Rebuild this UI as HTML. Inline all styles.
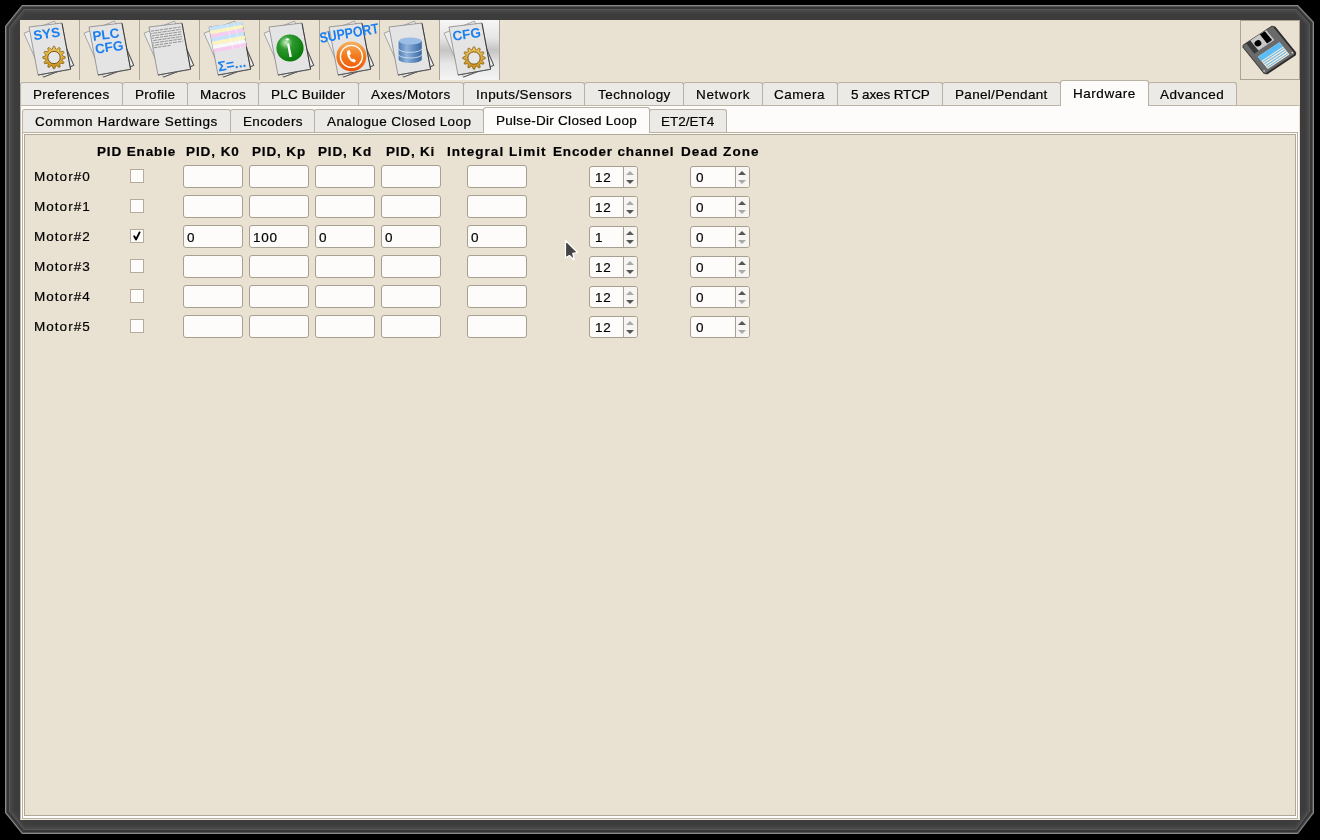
<!DOCTYPE html>
<html><head><meta charset="utf-8"><style>
html,body{margin:0;padding:0;}
body{width:1320px;height:840px;background:#000;position:relative;overflow:hidden;font-family:"Liberation Sans",sans-serif;}
div{position:absolute;box-sizing:border-box;}
.t{font-size:13.5px;line-height:16px;white-space:pre;color:#000;will-change:transform;-webkit-text-stroke:0.2px #000;}
#win{left:20px;top:20px;width:1280px;height:800px;background:#e9e1d2;}
.sep{top:20px;width:1px;height:60px;background:#aca493;}
#cfgbtn{left:440px;top:20px;width:59px;height:60px;background:linear-gradient(#f6f6f6 0%,#e6e6e6 30%,#c4c4c4 50%,#e6e6e6 72%,#f4f4f4 100%);}
#savebtn{left:1240px;top:20px;width:60px;height:60px;border:1px solid #aca493;}
#page{left:20px;top:105px;width:1280px;height:715px;background:#fdfcfa;border:1px solid #bdb5a5;border-bottom-color:#efe9de;border-right-color:#e7e0d3;}
.tab{background:#ebeae6;border:1px solid #b9b1a1;border-bottom:none;border-radius:3px 3px 0 0;}
.tab.act{background:#fdfcfa;}
#subpage{left:22px;top:132px;width:1276px;height:687px;border:1px solid #b9b1a1;background:#fdfcfa;}
#innerframe{left:24px;top:134px;width:1272px;height:682px;border:1px solid #b0a897;background:#e9e1d2;}
.chk{width:14px;height:14px;border:1px solid #b4ac9c;background:#fdfcfa;}
.chk svg{position:absolute;left:-1px;top:-1px;}
.ent{width:60px;height:23px;border:1px solid #a79f8f;border-radius:3px;background:#fdfcfb;}
.spin{height:22px;border:1px solid #a79f8f;border-radius:3px;background:#fdfcfb;}
.sb{top:0;width:1px;height:20px;background:#a79f8f;}
.arr{position:absolute;}
.sa{top:0;height:20px;background:#f6f5f1;border-radius:0 2px 2px 0;}

</style></head><body>
<svg style="position:absolute;left:0;top:0" width="1320" height="840"><polygon points="5.00,26.00 22.00,5.00 1298.00,5.00 1314.00,22.00 1314.00,813.00 1298.00,834.00 22.00,834.00 5.00,813.00" fill="#8a8a8a"/><polygon points="6.00,26.41 22.41,6.00 1297.59,6.00 1313.00,22.41 1313.00,812.59 1297.59,833.00 22.41,833.00 6.00,812.59" fill="#555"/><polygon points="7.00,26.83 22.83,7.00 1297.17,7.00 1312.00,22.83 1312.00,812.17 1297.17,832.00 22.83,832.00 7.00,812.17" fill="#363636"/><polygon points="9.00,27.66 23.66,9.00 1296.34,9.00 1310.00,23.66 1310.00,811.34 1296.34,830.00 23.66,830.00 9.00,811.34" fill="#575757"/><polygon points="10.00,28.07 24.07,10.00 1295.93,10.00 1309.00,24.07 1309.00,810.93 1295.93,829.00 24.07,829.00 10.00,810.93" fill="#474747"/><polygon points="12.00,28.90 24.90,12.00 1295.10,12.00 1307.00,24.90 1307.00,810.10 1295.10,827.00 24.90,827.00 12.00,810.10" fill="#404040"/><polygon points="14.00,29.73 25.73,14.00 1294.27,14.00 1305.00,25.73 1305.00,809.27 1294.27,825.00 25.73,825.00 14.00,809.27" fill="#3c3c3c"/></svg><div id="win"></div><div id="cfgbtn"></div><div class="sep" style="left:79px"></div><div class="sep" style="left:139px"></div><div class="sep" style="left:199px"></div><div class="sep" style="left:259px"></div><div class="sep" style="left:319px"></div><div class="sep" style="left:379px"></div><div class="sep" style="left:439px"></div><div class="sep" style="left:499px"></div><div id="savebtn"></div><div id="page"></div><div class="tab" style="left:20px;width:103px;top:82px;height:23px"></div><div class="t" style="left:33.27px;top:87.00px;width:80.5px;letter-spacing:0.334px;color:#000;">Preferences</div>
<div class="tab" style="left:122px;width:66px;top:82px;height:23px"></div><div class="t" style="left:134.79px;top:87.00px;width:44.4px;letter-spacing:0.308px;color:#000;">Profile</div>
<div class="tab" style="left:187px;width:72px;top:82px;height:23px"></div><div class="t" style="left:199.94px;top:87.00px;width:50.1px;letter-spacing:0.310px;color:#000;">Macros</div>
<div class="tab" style="left:258px;width:101px;top:82px;height:23px"></div><div class="t" style="left:271.36px;top:87.00px;width:78.3px;letter-spacing:0.203px;color:#000;">PLC Builder</div>
<div class="tab" style="left:358px;width:106px;top:82px;height:23px"></div><div class="t" style="left:371.16px;top:87.00px;width:83.7px;letter-spacing:0.423px;color:#000;">Axes/Motors</div>
<div class="tab" style="left:463px;width:122px;top:82px;height:23px"></div><div class="t" style="left:475.92px;top:87.00px;width:100.2px;letter-spacing:0.435px;color:#000;">Inputs/Sensors</div>
<div class="tab" style="left:584px;width:100px;top:82px;height:23px"></div><div class="t" style="left:597.59px;top:87.00px;width:76.8px;letter-spacing:0.452px;color:#000;">Technology</div>
<div class="tab" style="left:683px;width:80px;top:82px;height:23px"></div><div class="t" style="left:695.86px;top:87.00px;width:58.3px;letter-spacing:0.681px;color:#000;">Network</div>
<div class="tab" style="left:762px;width:76px;top:82px;height:23px"></div><div class="t" style="left:774.48px;top:87.00px;width:55.0px;letter-spacing:0.503px;color:#000;">Camera</div>
<div class="tab" style="left:837px;width:106px;top:82px;height:23px"></div><div class="t" style="left:850.62px;top:87.00px;width:82.8px;letter-spacing:-0.116px;color:#000;">5 axes RTCP</div>
<div class="tab" style="left:942px;width:119px;top:82px;height:23px"></div><div class="t" style="left:955.19px;top:87.00px;width:96.6px;letter-spacing:0.311px;color:#000;">Panel/Pendant</div>
<div class="tab act" style="left:1060px;width:89px;top:80px;height:26px"></div><div class="t" style="left:1073.12px;top:86.00px;width:66.8px;letter-spacing:0.529px;color:#000;">Hardware</div>
<div class="tab" style="left:1148px;width:89px;top:82px;height:23px"></div><div class="t" style="left:1160.39px;top:87.00px;width:68.2px;letter-spacing:0.521px;color:#000;">Advanced</div>
<div id="subpage"></div><div class="tab" style="left:22px;width:209px;top:109px;height:23px"></div><div class="t" style="left:35.05px;top:114.00px;width:186.9px;letter-spacing:0.555px;color:#000;">Common Hardware Settings</div>
<div class="tab" style="left:230px;width:85px;top:109px;height:23px"></div><div class="t" style="left:242.54px;top:114.00px;width:63.9px;letter-spacing:0.359px;color:#000;">Encoders</div>
<div class="tab" style="left:314px;width:170px;top:109px;height:23px"></div><div class="t" style="left:326.87px;top:114.00px;width:148.3px;letter-spacing:0.383px;color:#000;">Analogue Closed Loop</div>
<div class="tab act" style="left:483px;width:167px;top:107px;height:26px"></div><div class="t" style="left:496.00px;top:113.00px;width:145.0px;letter-spacing:0.282px;color:#000;">Pulse-Dir Closed Loop</div>
<div class="tab" style="left:649px;width:78px;top:109px;height:23px"></div><div class="t" style="left:661.38px;top:114.00px;width:57.2px;letter-spacing:-0.007px;color:#000;">ET2/ET4</div>
<div id="innerframe"></div><div class="t" style="left:96.91px;top:144.00px;width:83.2px;letter-spacing:0.864px;font-weight:bold;color:#000;">PID Enable</div>
<div class="t" style="left:186.12px;top:144.00px;width:57.8px;letter-spacing:0.926px;font-weight:bold;color:#000;">PID, K0</div>
<div class="t" style="left:252.00px;top:144.00px;width:58.0px;letter-spacing:0.855px;font-weight:bold;color:#000;">PID, Kp</div>
<div class="t" style="left:318.00px;top:144.00px;width:58.0px;letter-spacing:0.855px;font-weight:bold;color:#000;">PID, Kd</div>
<div class="t" style="left:386.42px;top:144.00px;width:53.2px;letter-spacing:0.806px;font-weight:bold;color:#000;">PID, Ki</div>
<div class="t" style="left:447.22px;top:144.00px;width:103.6px;letter-spacing:1.057px;font-weight:bold;color:#000;">Integral Limit</div>
<div class="t" style="left:552.82px;top:144.00px;width:125.4px;letter-spacing:0.839px;font-weight:bold;color:#000;">Encoder channel</div>
<div class="t" style="left:681.17px;top:144.00px;width:82.7px;letter-spacing:1.071px;font-weight:bold;color:#000;">Dead Zone</div>
<div class="t" style="left:34.00px;top:169.00px;width:60.7px;letter-spacing:1.029px;color:#000;">Motor#0</div>
<div class="chk" style="left:130px;top:169px"></div><div class="ent" style="left:183px;top:165px"></div><div class="ent" style="left:249px;top:165px"></div><div class="ent" style="left:315px;top:165px"></div><div class="ent" style="left:381px;top:165px"></div><div class="ent" style="left:467px;top:165px"></div><div class="spin" style="left:589px;top:166px;width:49px"><div class="sb" style="left:33px"></div><div class="sa" style="left:34px;width:13px"></div></div><div class="t" style="left:595.00px;top:170.00px;width:20.5px;letter-spacing:0.758px;color:#000;">12</div>
<svg class="arr" style="left:626px;top:170px" width="9" height="15"><path d="M0 5 L4 1 L8 5Z" fill="#aaa"/><path d="M0 10 L4 14 L8 10Z" fill="#555"/></svg><div class="spin" style="left:690px;top:166px;width:60px"><div class="sb" style="left:44px"></div><div class="sa" style="left:45px;width:13px"></div></div><div class="t" style="left:696.00px;top:170.00px;width:12.3px;letter-spacing:0.766px;color:#000;">0</div>
<svg class="arr" style="left:738px;top:170px" width="9" height="15"><path d="M0 5 L4 1 L8 5Z" fill="#555"/><path d="M0 10 L4 14 L8 10Z" fill="#aaa"/></svg><div class="t" style="left:34.00px;top:199.00px;width:60.7px;letter-spacing:1.029px;color:#000;">Motor#1</div>
<div class="chk" style="left:130px;top:199px"></div><div class="ent" style="left:183px;top:195px"></div><div class="ent" style="left:249px;top:195px"></div><div class="ent" style="left:315px;top:195px"></div><div class="ent" style="left:381px;top:195px"></div><div class="ent" style="left:467px;top:195px"></div><div class="spin" style="left:589px;top:196px;width:49px"><div class="sb" style="left:33px"></div><div class="sa" style="left:34px;width:13px"></div></div><div class="t" style="left:595.00px;top:200.00px;width:20.5px;letter-spacing:0.758px;color:#000;">12</div>
<svg class="arr" style="left:626px;top:200px" width="9" height="15"><path d="M0 5 L4 1 L8 5Z" fill="#aaa"/><path d="M0 10 L4 14 L8 10Z" fill="#555"/></svg><div class="spin" style="left:690px;top:196px;width:60px"><div class="sb" style="left:44px"></div><div class="sa" style="left:45px;width:13px"></div></div><div class="t" style="left:696.00px;top:200.00px;width:12.3px;letter-spacing:0.766px;color:#000;">0</div>
<svg class="arr" style="left:738px;top:200px" width="9" height="15"><path d="M0 5 L4 1 L8 5Z" fill="#555"/><path d="M0 10 L4 14 L8 10Z" fill="#aaa"/></svg><div class="t" style="left:34.00px;top:229.00px;width:60.7px;letter-spacing:1.029px;color:#000;">Motor#2</div>
<div class="chk" style="left:130px;top:229px"><svg width="13" height="13" viewBox="0 0 13 13"><path d="M4.2 7.3 L6.1 10.4 L9.6 3.4" stroke="#000" stroke-width="1.9" fill="none" stroke-linecap="round" stroke-linejoin="round"/></svg></div><div class="ent" style="left:183px;top:225px"></div><div class="ent" style="left:249px;top:225px"></div><div class="ent" style="left:315px;top:225px"></div><div class="ent" style="left:381px;top:225px"></div><div class="ent" style="left:467px;top:225px"></div><div class="t" style="left:187.00px;top:230.00px;width:12.3px;letter-spacing:0.766px;color:#000;">0</div>
<div class="t" style="left:253.00px;top:230.00px;width:28.8px;letter-spacing:0.766px;color:#000;">100</div>
<div class="t" style="left:319.00px;top:230.00px;width:12.3px;letter-spacing:0.766px;color:#000;">0</div>
<div class="t" style="left:385.00px;top:230.00px;width:12.3px;letter-spacing:0.766px;color:#000;">0</div>
<div class="t" style="left:471.00px;top:230.00px;width:12.3px;letter-spacing:0.766px;color:#000;">0</div>
<div class="spin" style="left:589px;top:226px;width:49px"><div class="sb" style="left:33px"></div><div class="sa" style="left:34px;width:13px"></div></div><div class="t" style="left:595.00px;top:230.00px;width:12.3px;letter-spacing:0.766px;color:#000;">1</div>
<svg class="arr" style="left:626px;top:230px" width="9" height="15"><path d="M0 5 L4 1 L8 5Z" fill="#5a5a5a"/><path d="M0 10 L4 14 L8 10Z" fill="#555"/></svg><div class="spin" style="left:690px;top:226px;width:60px"><div class="sb" style="left:44px"></div><div class="sa" style="left:45px;width:13px"></div></div><div class="t" style="left:696.00px;top:230.00px;width:12.3px;letter-spacing:0.766px;color:#000;">0</div>
<svg class="arr" style="left:738px;top:230px" width="9" height="15"><path d="M0 5 L4 1 L8 5Z" fill="#555"/><path d="M0 10 L4 14 L8 10Z" fill="#aaa"/></svg><div class="t" style="left:34.00px;top:259.00px;width:60.7px;letter-spacing:1.029px;color:#000;">Motor#3</div>
<div class="chk" style="left:130px;top:259px"></div><div class="ent" style="left:183px;top:255px"></div><div class="ent" style="left:249px;top:255px"></div><div class="ent" style="left:315px;top:255px"></div><div class="ent" style="left:381px;top:255px"></div><div class="ent" style="left:467px;top:255px"></div><div class="spin" style="left:589px;top:256px;width:49px"><div class="sb" style="left:33px"></div><div class="sa" style="left:34px;width:13px"></div></div><div class="t" style="left:595.00px;top:260.00px;width:20.5px;letter-spacing:0.758px;color:#000;">12</div>
<svg class="arr" style="left:626px;top:260px" width="9" height="15"><path d="M0 5 L4 1 L8 5Z" fill="#aaa"/><path d="M0 10 L4 14 L8 10Z" fill="#555"/></svg><div class="spin" style="left:690px;top:256px;width:60px"><div class="sb" style="left:44px"></div><div class="sa" style="left:45px;width:13px"></div></div><div class="t" style="left:696.00px;top:260.00px;width:12.3px;letter-spacing:0.766px;color:#000;">0</div>
<svg class="arr" style="left:738px;top:260px" width="9" height="15"><path d="M0 5 L4 1 L8 5Z" fill="#555"/><path d="M0 10 L4 14 L8 10Z" fill="#aaa"/></svg><div class="t" style="left:34.00px;top:289.00px;width:60.7px;letter-spacing:1.029px;color:#000;">Motor#4</div>
<div class="chk" style="left:130px;top:289px"></div><div class="ent" style="left:183px;top:285px"></div><div class="ent" style="left:249px;top:285px"></div><div class="ent" style="left:315px;top:285px"></div><div class="ent" style="left:381px;top:285px"></div><div class="ent" style="left:467px;top:285px"></div><div class="spin" style="left:589px;top:286px;width:49px"><div class="sb" style="left:33px"></div><div class="sa" style="left:34px;width:13px"></div></div><div class="t" style="left:595.00px;top:290.00px;width:20.5px;letter-spacing:0.758px;color:#000;">12</div>
<svg class="arr" style="left:626px;top:290px" width="9" height="15"><path d="M0 5 L4 1 L8 5Z" fill="#aaa"/><path d="M0 10 L4 14 L8 10Z" fill="#555"/></svg><div class="spin" style="left:690px;top:286px;width:60px"><div class="sb" style="left:44px"></div><div class="sa" style="left:45px;width:13px"></div></div><div class="t" style="left:696.00px;top:290.00px;width:12.3px;letter-spacing:0.766px;color:#000;">0</div>
<svg class="arr" style="left:738px;top:290px" width="9" height="15"><path d="M0 5 L4 1 L8 5Z" fill="#555"/><path d="M0 10 L4 14 L8 10Z" fill="#aaa"/></svg><div class="t" style="left:34.00px;top:319.00px;width:60.7px;letter-spacing:1.029px;color:#000;">Motor#5</div>
<div class="chk" style="left:130px;top:319px"></div><div class="ent" style="left:183px;top:315px"></div><div class="ent" style="left:249px;top:315px"></div><div class="ent" style="left:315px;top:315px"></div><div class="ent" style="left:381px;top:315px"></div><div class="ent" style="left:467px;top:315px"></div><div class="spin" style="left:589px;top:316px;width:49px"><div class="sb" style="left:33px"></div><div class="sa" style="left:34px;width:13px"></div></div><div class="t" style="left:595.00px;top:320.00px;width:20.5px;letter-spacing:0.758px;color:#000;">12</div>
<svg class="arr" style="left:626px;top:320px" width="9" height="15"><path d="M0 5 L4 1 L8 5Z" fill="#aaa"/><path d="M0 10 L4 14 L8 10Z" fill="#555"/></svg><div class="spin" style="left:690px;top:316px;width:60px"><div class="sb" style="left:44px"></div><div class="sa" style="left:45px;width:13px"></div></div><div class="t" style="left:696.00px;top:320.00px;width:12.3px;letter-spacing:0.766px;color:#000;">0</div>
<svg class="arr" style="left:738px;top:320px" width="9" height="15"><path d="M0 5 L4 1 L8 5Z" fill="#555"/><path d="M0 10 L4 14 L8 10Z" fill="#aaa"/></svg><svg style="position:absolute;left:560px;top:236px" width="24" height="30" viewBox="560 236 24 30"><path d="M565.5 240.5 L577.5 252.5 L572.8 253.3 L574 260 L569.5 255.5 L565.5 257.8 Z" fill="#444" stroke="#fff" stroke-width="1.2" stroke-linejoin="round"/></svg>
<svg style="position:absolute;left:0;top:0" width="1320" height="90" font-family="Liberation Sans, sans-serif">
<defs>
<g id="doc">
<polygon points="4,13.2 34.5,1.1 53.8,45.4 23.4,57.1" fill="#ececec" stroke="#8a8a8a" stroke-width="0.7"/>
<polyline points="45,25 53.8,45.4 23.4,57.1" fill="none" stroke="#4a4a4a" stroke-width="0.9"/>
<polygon points="9,7 42,3 50.6,49.3 18,55" fill="#e4e4e4" stroke="#7a7a7a" stroke-width="0.7"/>
<line x1="42" y1="3.3" x2="50.6" y2="49.3" stroke="#3a3a3a" stroke-width="1"/>
<line x1="18" y1="55" x2="50.6" y2="49.3" stroke="#555" stroke-width="1"/>
</g>
<path id="gearp" d="M11.18,-0.70 L11.18,0.70 L8.43,1.70 L8.15,2.74 L10.03,4.98 L9.33,6.20 L6.45,5.69 L5.69,6.45 L6.20,9.33 L4.98,10.03 L2.74,8.15 L1.70,8.43 L0.70,11.18 L-0.70,11.18 L-1.70,8.43 L-2.74,8.15 L-4.98,10.03 L-6.20,9.33 L-5.69,6.45 L-6.45,5.69 L-9.33,6.20 L-10.03,4.98 L-8.15,2.74 L-8.43,1.70 L-11.18,0.70 L-11.18,-0.70 L-8.43,-1.70 L-8.15,-2.74 L-10.03,-4.98 L-9.33,-6.20 L-6.45,-5.69 L-5.69,-6.45 L-6.20,-9.33 L-4.98,-10.03 L-2.74,-8.15 L-1.70,-8.43 L-0.70,-11.18 L0.70,-11.18 L1.70,-8.43 L2.74,-8.15 L4.98,-10.03 L6.20,-9.33 L5.69,-6.45 L6.45,-5.69 L9.33,-6.20 L10.03,-4.98 L8.15,-2.74 L8.43,-1.70Z"/>
<g id="gear">
<use href="#gearp" fill="url(#gold)" stroke="#7a5508" stroke-width="0.7"/>
<circle r="6.2" fill="#e6e6e6" stroke="#6a4a08" stroke-width="0.9"/>
</g>
<linearGradient id="gold" x1="0" y1="0" x2="0" y2="1"><stop offset="0" stop-color="#f0c860"/><stop offset="1" stop-color="#c8901c"/></linearGradient>
<radialGradient id="green" cx="0.35" cy="0.3" r="0.7"><stop offset="0" stop-color="#c9efc4"/><stop offset="0.35" stop-color="#2f9a2f"/><stop offset="1" stop-color="#0a7a0a"/></radialGradient>
<linearGradient id="orange" x1="0" y1="0" x2="0" y2="1"><stop offset="0" stop-color="#f7b060"/><stop offset="0.5" stop-color="#f07a1c"/><stop offset="1" stop-color="#f0560a"/></linearGradient>
<linearGradient id="dbbody" x1="0" y1="0" x2="1" y2="0"><stop offset="0" stop-color="#4f7cb2"/><stop offset="0.35" stop-color="#8fb2da"/><stop offset="0.7" stop-color="#5d88bd"/><stop offset="1" stop-color="#3f6aa0"/></linearGradient>
</defs>
<!-- 1 SYS -->
<g transform="translate(20,20)">
<use href="#doc"/>
<text x="26.5" y="18.5" transform="rotate(-8 26 13)" text-anchor="middle" font-size="13.5" font-weight="bold" fill="#1a7ff0">SYS</text>
<use href="#gear" x="34" y="37.5"/>
</g>
<!-- 2 PLC CFG -->
<g transform="translate(80,20)">
<use href="#doc"/>
<g transform="rotate(-8 27 19)" font-weight="bold" fill="#1a7ff0" font-size="13.5" text-anchor="middle">
<text x="26.5" y="19">PLC</text>
<text x="28" y="32">CFG</text>
</g>
</g>
<!-- 3 text doc -->
<g transform="translate(140,20)">
<use href="#doc"/>
<g transform="rotate(-8 27 17)" stroke="#6e6e6e" stroke-width="0.65" stroke-dasharray="3.2 0.8 4 0.8 3.5 0.8 4.2 0.8">
<line x1="12" y1="9" x2="42" y2="9"/>
<line x1="12" y1="11.4" x2="42" y2="11.4" stroke-dashoffset="2"/>
<line x1="12" y1="13.8" x2="42" y2="13.8" stroke-dashoffset="5"/>
<line x1="12" y1="16.2" x2="42" y2="16.2" stroke-dashoffset="1"/>
<line x1="12" y1="18.6" x2="42" y2="18.6" stroke-dashoffset="3"/>
<line x1="12" y1="21" x2="42" y2="21" stroke-dashoffset="6"/>
<line x1="12" y1="23.4" x2="42" y2="23.4" stroke-dashoffset="2"/>
<line x1="12" y1="25.8" x2="30" y2="25.8" stroke-dashoffset="4"/>
</g>
</g>
<!-- 4 spreadsheet -->
<g transform="translate(200,20)">
<use href="#doc"/>
<clipPath id="pg4"><polygon points="9,6.5 42.5,2 50.5,49.5 18,55"/></clipPath>
<g clip-path="url(#pg4)">
<g transform="rotate(-10.5 27 17)">
<rect x="5" y="4" width="45" height="3.7" fill="#c4e2fa"/>
<rect x="5" y="7.7" width="45" height="3.7" fill="#faf4c0"/>
<rect x="5" y="11.4" width="45" height="3.7" fill="#f6cdf0"/>
<rect x="5" y="15.1" width="45" height="3.7" fill="#c4e2fa"/>
<rect x="5" y="18.8" width="45" height="3.7" fill="#faf4c0"/>
<rect x="5" y="22.5" width="45" height="3.7" fill="#f8f8f8"/>
<rect x="5" y="26.2" width="45" height="3.7" fill="#f6cdf0"/>
<line x1="29" y1="2" x2="31" y2="30" stroke="#fff" stroke-width="0.4"/>
<line x1="36.5" y1="2" x2="38.5" y2="30" stroke="#fff" stroke-width="0.4"/>
</g>
</g>
<text x="32" y="49" transform="rotate(-10 32 45)" text-anchor="middle" font-size="14" font-weight="bold" fill="#1a7ff0">Σ=...</text>
</g>
<!-- 5 info -->
<g transform="translate(260,20)">
<use href="#doc"/>
<circle cx="30" cy="28" r="13.6" fill="url(#green)"/>
<path d="M27 23.8 L29.2 23.4 L31.9 36.8 L29.5 37.2Z" fill="#fff"/>
<ellipse cx="27.4" cy="19.4" rx="1.6" ry="1" fill="#fff" stroke="#cfe8cf" stroke-width="0.3"/>
</g>
<!-- 6 support -->
<g transform="translate(320,20)">
<use href="#doc"/>
<circle cx="31.4" cy="36.4" r="15" fill="url(#orange)"/>
<circle cx="31.4" cy="36.4" r="11" fill="none" stroke="#fff" stroke-width="1.3"/>
<path d="M27.5 30.5 Q26 33 28.5 38 Q31 42 34.5 42.5 L36 40.5 L33.5 38.5 L32 39.5 Q30 37.5 29.5 35 L31 34 L29.8 30.2Z" fill="#fff"/>
<text x="30" y="18" transform="rotate(-9.5 30 18)" text-anchor="middle" font-size="14.5" font-weight="bold" fill="#1a7ff0" textLength="60" lengthAdjust="spacingAndGlyphs">SUPPORT</text>
</g>
<!-- 7 db -->
<g transform="translate(380,20)">
<use href="#doc"/>
<path d="M18.6 21 L18.6 39.5 A11.6 3.5 0 0 0 41.8 39.5 L41.8 21Z" fill="url(#dbbody)"/>
<path d="M18.6 28.8 A11.6 3.5 0 0 0 41.8 28.8" fill="none" stroke="#dbe8f5" stroke-width="0.8"/>
<path d="M18.6 34.5 A11.6 3.5 0 0 0 41.8 34.5" fill="none" stroke="#dbe8f5" stroke-width="0.8"/>
<ellipse cx="30.2" cy="21" rx="11.6" ry="3.5" fill="#9cbde4"/>
</g>
<!-- 8 CFG -->
<g transform="translate(440,20)">
<use href="#doc"/>
<text x="26.5" y="19" transform="rotate(-8 26 13)" text-anchor="middle" font-size="13.5" font-weight="bold" fill="#1a7ff0">CFG</text>
<use href="#gear" x="34" y="38"/>
</g>
<!-- save floppy -->
<g transform="matrix(0.31,-0.207,0.232,0.286,1242,46.05)">
<path d="M4 0 L96 0 L100 4 L100 96 L96 100 L4 100 L0 96 L0 4Z" fill="#6a6a6a" stroke="#3a3a3a" stroke-width="2.5"/>
<rect x="13" y="0" width="14" height="36" fill="#383838"/>
<rect x="27" y="0" width="51" height="35" fill="#c8c8c8"/>
<rect x="57" y="1" width="16" height="31" fill="#000"/>
<ellipse cx="38" cy="18" rx="9" ry="8.5" fill="#000"/>
<rect x="15" y="48" width="70" height="43" fill="#f1e9d6"/>
<rect x="15" y="48" width="70" height="15" fill="#5cbcf5"/>
<g stroke="#62b4ea" stroke-width="2.6"><line x1="17" y1="67.5" x2="83" y2="67.5"/><line x1="17" y1="74" x2="83" y2="74"/><line x1="17" y1="80.5" x2="83" y2="80.5"/><line x1="17" y1="87" x2="83" y2="87"/></g>
<path d="M100 6 L100 96 L96 100 L4 100" fill="none" stroke="#2e2e2e" stroke-width="5"/>
<circle cx="94" cy="91" r="2.2" fill="#ddd"/>
<circle cx="4" cy="90" r="2.2" fill="#ddd"/>
</g>
</svg>

</body></html>
